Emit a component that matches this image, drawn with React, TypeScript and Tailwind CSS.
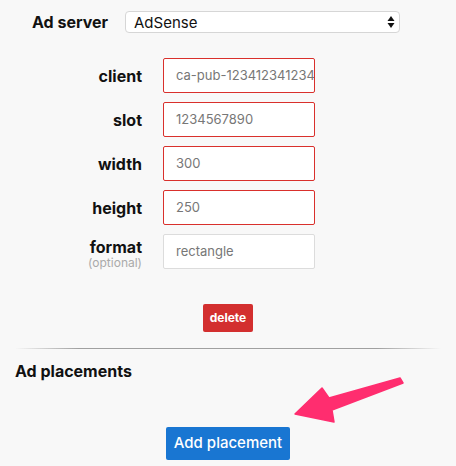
import React from "react";

const fields = [
  { label: "client", value: "ca-pub-1234123412341234", invalid: true },
  { label: "slot", value: "1234567890", invalid: true },
  { label: "width", value: "300", invalid: true },
  { label: "height", value: "250", invalid: true },
  { label: "format", value: "rectangle", invalid: false, optional: true },
];

function Arrow() {
  return (
    <svg className="absolute left-0 top-0" width="456" height="466" viewBox="0 0 456 466">
      <polygon
        points="295,414 322,388 329,398 400,378 403,383 332,410 334,422"
        fill="#ff2d6f"
        stroke="#ff2d6f"
        strokeWidth="1.5"
        strokeLinejoin="round"
      />
    </svg>
  );
}

export default function App() {
  return (
    <div
      className="relative w-[456px] h-[466px] overflow-hidden bg-[#f8f8f8] text-[#111]"
      style={{ fontFamily: "Inter, 'Liberation Sans', sans-serif" }}
    >
      <div className="flex items-center pt-[11px] pl-[32px]">
        <span className="w-[93px] text-[16px] font-bold leading-[21px]">Ad server</span>
        <div className="flex h-[22px] w-[275px] items-center justify-between rounded-[4px] border border-[#d6d6d6] bg-white pl-[8px] pr-[4px]">
          <span className="text-[15px] leading-none text-[#111]">AdSense</span>
          <svg width="8" height="14" viewBox="0 0 8 14">
            <polygon points="4,1 7.5,6 0.5,6" fill="#111" />
            <polygon points="4,13 7.5,8 0.5,8" fill="#111" />
          </svg>
        </div>
      </div>

      <div className="mt-[25px] flex flex-col gap-[9px]">
        {fields.map((f) => (
          <div key={f.label} className="flex h-[35px] items-center">
            <div
              className={
                "flex w-[142px] flex-col items-end " +
                (f.optional ? "self-start pt-[4px]" : "")
              }
            >
              <span className="text-[16px] font-bold leading-[18px]">{f.label}</span>
              {f.optional && (
                <span className="text-[12px] leading-[14px] text-[#aaa]">(optional)</span>
              )}
            </div>
            <div
              className={
                "ml-[21px] flex h-[35px] w-[152px] items-center overflow-hidden whitespace-nowrap rounded-[2px] border bg-white pl-[12px] text-[13px] text-[#777] " +
                (f.invalid ? "border-[#d9302c]" : "border-[#dcdcdc]")
              }
            >
              {f.value}
            </div>
          </div>
        ))}
      </div>

      <div className="mt-[35px] flex justify-center">
        <button className="h-[28px] w-[50px] rounded-[2px] bg-[#d32f2f] text-[12px] font-bold text-white">
          delete
        </button>
      </div>

      <div className="mx-[15px] mt-[16px] h-px bg-[linear-gradient(to_right,rgba(160,160,160,0),#a0a0a0_15%,#a0a0a0_85%,rgba(160,160,160,0))]" />

      <div className="mt-[12px] pl-[15px] text-[16px] font-bold leading-[20px]">Ad placements</div>

      <div className="mt-[46px] flex justify-center">
        <button className="h-[33px] w-[124px] rounded-[2px] bg-[#1976d2] text-[15px] font-medium text-white">
          Add placement
        </button>
      </div>

      <Arrow />
    </div>
  );
}
